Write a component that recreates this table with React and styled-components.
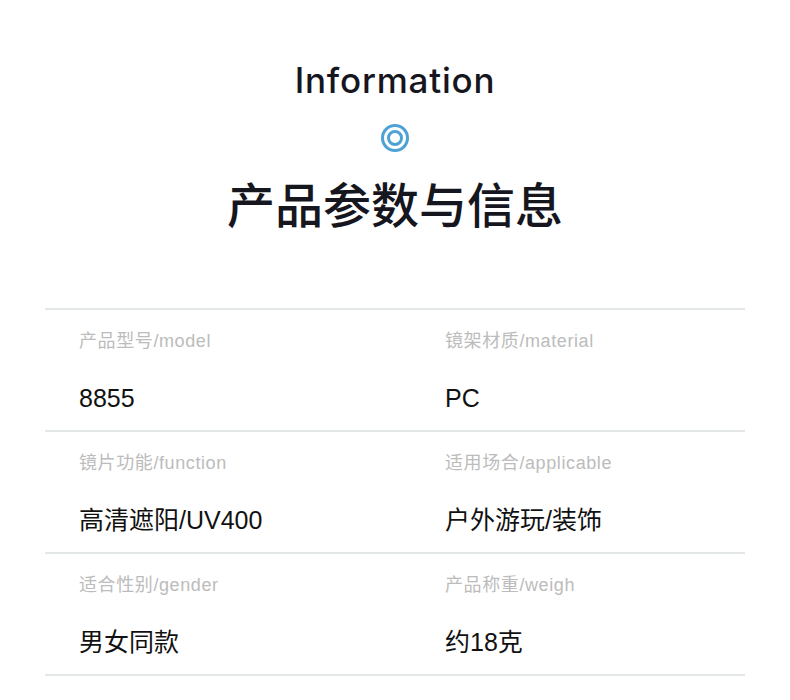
import React from "react";
import styled, { createGlobalStyle } from "styled-components";

const Global = createGlobalStyle`
  html, body { margin: 0; padding: 0; background: #fff; }
  body { font-family: "Liberation Sans", "Noto Sans CJK SC", sans-serif; }
`;

const Page = styled.div`
  width: 790px;
  height: 700px;
  background: #fff;
  display: flex;
  flex-direction: column;
  align-items: center;
  padding-top: 58px;
  box-sizing: border-box;
`;

const EnTitle = styled.h2`
  margin: 0;
  font-family: "Inter", "Lato", sans-serif;
  font-weight: 500;
  font-size: 35px;
  line-height: 44px;
  letter-spacing: 0.8px;
  color: #16161e;
`;

const Ring = styled.svg`
  margin-top: 21px;
  display: block;
`;

const CnTitle = styled.h1`
  margin: 19px 0 0;
  font-family: "Noto Sans CJK SC", sans-serif;
  font-weight: 500;
  font-size: 48px;
  line-height: 60px;
  color: #16161e;
`;

const Table = styled.div`
  margin-top: 76px;
  width: 700px;
  display: grid;
  grid-template-columns: 366px 1fr;
  border-top: 2px solid #e3e7e7;
`;

const Cell = styled.div`
  height: 122px;
  box-sizing: border-box;
  padding: 19px 0 0 34px;
  border-bottom: 2px solid #e3e7e7;
  display: flex;
  flex-direction: column;
`;

const Label = styled.div`
  font-family: "Liberation Sans", "Noto Sans CJK SC", sans-serif;
  font-size: 18px;
  line-height: 24px;
  letter-spacing: 0.6px;
  color: #bcbcbc;
`;

const Value = styled.div`
  margin-top: 29px;
  font-family: "Liberation Sans", "Noto Sans CJK SC", sans-serif;
  font-size: 25px;
  line-height: 32px;
  color: #111;
`;

const items = [
  ["产品型号/model", "8855"],
  ["镜架材质/material", "PC"],
  ["镜片功能/function", "高清遮阳/UV400"],
  ["适用场合/applicable", "户外游玩/装饰"],
  ["适合性别/gender", "男女同款"],
  ["产品称重/weigh", "约18克"],
];

export default function App() {
  return (
    <>
      <Global />
      <Page>
        <EnTitle>Information</EnTitle>
        <Ring width="30" height="30" viewBox="0 0 30 30">
          <circle cx="15" cy="15" r="12.5" fill="none" stroke="#4ea2d6" strokeWidth="3" />
          <circle cx="15" cy="15" r="6.5" fill="none" stroke="#4ea2d6" strokeWidth="3" />
        </Ring>
        <CnTitle>产品参数与信息</CnTitle>
        <Table>
          {items.map(([l, v]) => (
            <Cell key={l}>
              <Label>{l}</Label>
              <Value>{v}</Value>
            </Cell>
          ))}
        </Table>
      </Page>
    </>
  );
}
